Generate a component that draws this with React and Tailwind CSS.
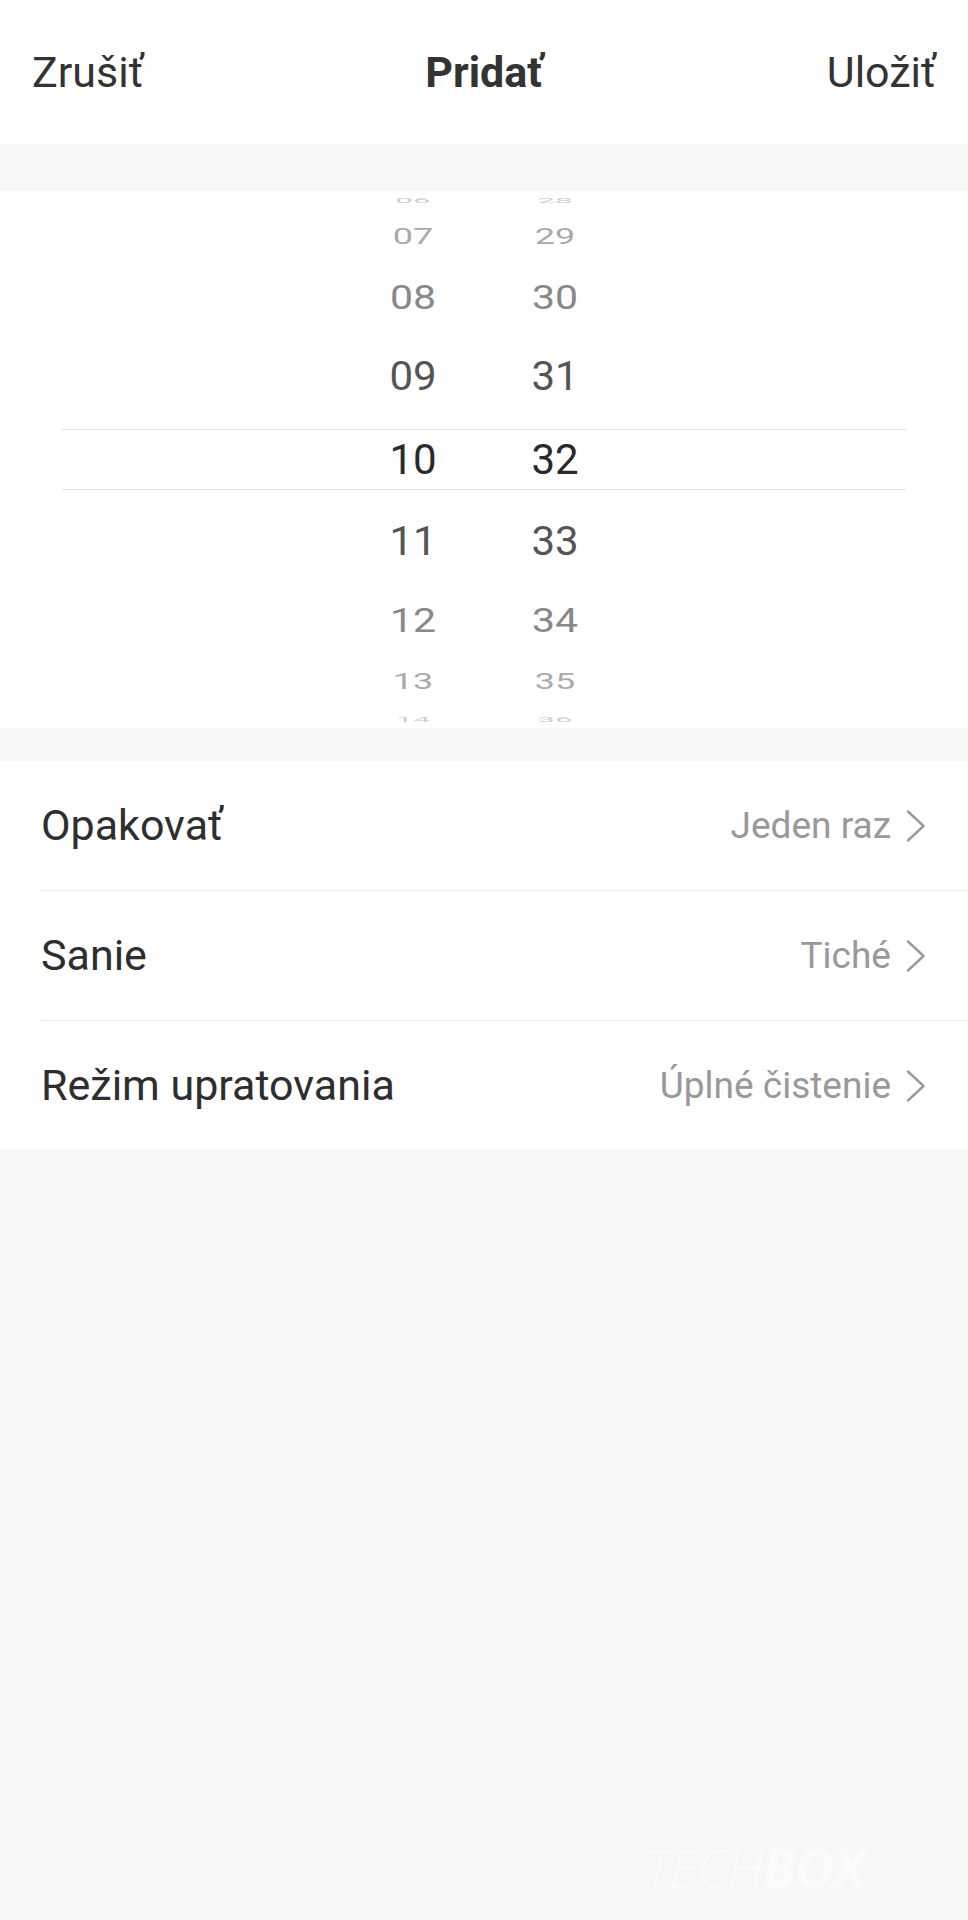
import React from "react";

const rows = [
  { h: "06", m: "28", slot: "h-[18px]", txt: "text-[31px] text-[#cfcfcf] scale-y-[0.23]", pad: "" },
  { h: "07", m: "29", slot: "h-[56px]", txt: "text-[36px] text-[#aaaaaa] scale-y-[0.62]", pad: "" },
  { h: "08", m: "30", slot: "h-[66px]", txt: "text-[41px] text-[#888888] scale-y-[0.79]", pad: "" },
  { h: "09", m: "31", slot: "h-[98px]", txt: "text-[42px] text-[#555555] scale-y-[0.95]", pad: "pb-[6px]" },
];
const rowsBottom = [
  { h: "11", m: "33", slot: "h-[98px]", txt: "text-[42px] text-[#555555] scale-y-[0.95]", pad: "pt-[6px]" },
  { h: "12", m: "34", slot: "h-[66px]", txt: "text-[41px] text-[#888888] scale-y-[0.79]", pad: "" },
  { h: "13", m: "35", slot: "h-[56px]", txt: "text-[36px] text-[#aaaaaa] scale-y-[0.62]", pad: "" },
  { h: "14", m: "36", slot: "h-[18px]", txt: "text-[31px] text-[#cfcfcf] scale-y-[0.23]", pad: "" },
];

function PickerRow({ r }) {
  return (
    <div className={`${r.slot} ${r.pad} flex items-center justify-center overflow-hidden`}>
      <div className="w-[142px] flex justify-center">
        <span className={`block leading-none ${r.txt}`}>{r.h}</span>
      </div>
      <div className="w-[142px] flex justify-center">
        <span className={`block leading-none ${r.txt}`}>{r.m}</span>
      </div>
    </div>
  );
}

function Chevron() {
  return (
    <svg width="20" height="32" viewBox="0 0 20 32" className="ml-[15px] shrink-0">
      <polyline points="2,1.5 17.5,16 2,30.5" fill="none" stroke="#9a9a9a" strokeWidth="2.4" strokeLinecap="round" strokeLinejoin="round" />
    </svg>
  );
}

function ListRow({ label, value, divider }) {
  return (
    <div className="bg-white">
      <div className="h-[129px] flex items-center justify-between pl-[41px] pr-[42px]">
        <span className="text-[43px] text-[#2e2e2e]">{label}</span>
        <div className="flex items-center">
          <span className="text-[37px] text-[#999999]">{value}</span>
          <Chevron />
        </div>
      </div>
      {divider && <div className="ml-[41px] h-px bg-[#ececec]" />}
    </div>
  );
}

export default function App() {
  return (
    <div className="min-h-[1920px] w-full bg-[#f7f7f7] flex flex-col" style={{ fontFamily: "Roboto, 'Noto Sans', sans-serif" }}>
      <header className="h-[144px] bg-white grid grid-cols-3 items-center px-[32px] text-[43px] text-[#333333]">
        <span className="justify-self-start">Zrušiť</span>
        <span className="justify-self-center font-bold">Pridať</span>
        <span className="justify-self-end">Uložiť</span>
      </header>
      <div className="h-[47px]" />
      <section className="bg-white flex flex-col">
        {rows.map((r) => (
          <PickerRow key={r.h} r={r} />
        ))}
        <div className="mx-[62px] h-[61px] border-y-[1.5px] border-[#e3e3e3] flex items-center justify-center">
          <div className="w-[142px] flex justify-center">
            <span className="block leading-none text-[42px] text-[#2a2a2a]">10</span>
          </div>
          <div className="w-[142px] flex justify-center">
            <span className="block leading-none text-[42px] text-[#2a2a2a]">32</span>
          </div>
        </div>
        {rowsBottom.map((r) => (
          <PickerRow key={r.h} r={r} />
        ))}
      </section>
      <div className="h-[33px]" />
      <section className="flex flex-col">
        <ListRow label="Opakovať" value="Jeden raz" divider />
        <ListRow label="Sanie" value="Tiché" divider />
        <ListRow label="Režim upratovania" value="Úplné čistenie" />
      </section>
      <div className="flex-1 flex items-end justify-end pr-[104px] pb-[12px]">
        <span className="italic text-[54px] text-[#fbfbfb] tracking-tight" style={{ fontFamily: "'Open Sans', sans-serif" }}>
          <span className="font-light">TECH</span>
          <span className="font-bold">BOX</span>
        </span>
      </div>
    </div>
  );
}
